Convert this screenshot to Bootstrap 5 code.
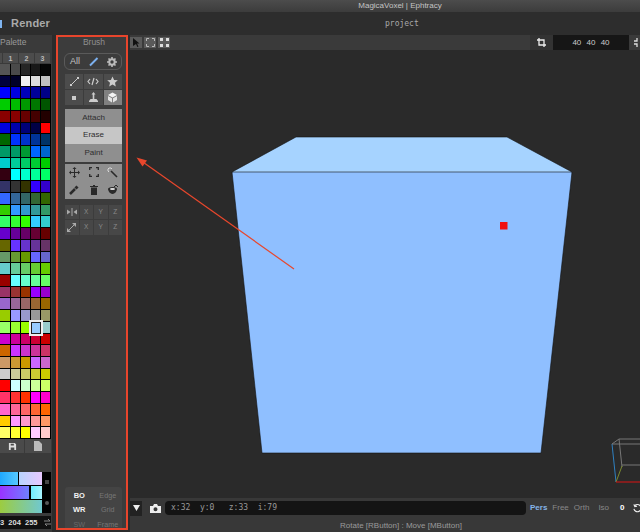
<!DOCTYPE html>
<html lang="en">
<head>
  <meta charset="UTF-8" />
  <title>MagicaVoxel | Ephtracy</title>
  <link href="https://cdn.jsdelivr.net/npm/bootstrap@5.3.0/dist/css/bootstrap.min.css" rel="stylesheet" />
  <style>
    html, body { background: #2b2b2b; }
    body { font-family: "Liberation Sans", Arial, sans-serif; color: #aaa; font-size: 8px; line-height: 1; }
    svg { display: block; }
    .app { width: 640px; height: 532px; overflow: hidden; }
    .titlebar { height: 12px; background: linear-gradient(#4c4c4c, #3c3c3c); color: #c4c4c4; font-size: 8px; padding-left: 160px; flex: none; }
    .menubar { height: 23px; background: #2d2d2d; flex: none; }
    .menu-mark { width: 2px; height: 8px; background: #7fb4f0; }
    .menu-item { width: 119px; padding-left: 9px; font-size: 11px; font-weight: bold; color: #aaa; letter-spacing: .2px; }
    .project { font-family: "DejaVu Sans Mono", monospace; font-size: 8px; color: #a8a8a8; margin-left: 264px; }
    .work { height: 497px; }
    .pal-col { width: 52px; background: #3a3a3a; }
    .side-title { height: 18px; font-size: 8.5px; color: #999; padding-bottom: 4px; }
    .pal-tabs { height: 10px; margin-bottom: 1px; display: grid; grid-template-columns: 3px repeat(3, 16px); font-size: 7px; font-weight: bold; color: #bbb; }
    .pal-tabs span { background: #4c4c4c; margin-right: 1px; display: flex; align-items: center; justify-content: center; }
    .pal-grid { display: grid; grid-template-columns: 11px repeat(4, 10px); grid-auto-rows: 11.72px; gap: 0; background: #000; width: 51px; }
    .pal-cell { border-right: 1px solid #000; border-bottom: 1px solid #000; position: relative; }
    .pal-cell.on { outline: 2px solid #eee; outline-offset: 0; z-index: 1; border: 1px solid #222; }
    .pal-foot { height: 14px; width: 51px; display: grid; grid-template-columns: 24px 26px; gap: 1px; }
    .pal-foot span { background: #4a4a4a; display: flex; align-items: center; justify-content: center; }
    .pickers { margin-top: 19px; height: 41px; width: 51px; background: #000; }
    .pick-rows { width: 42px; }
    .pick-row { height: 13px; margin-bottom: 1px; }
    .pick-a { background: linear-gradient(90deg, #1fa8ff, #56c8ff); width: 18px; margin-right: 1px; }
    .pick-b { background: linear-gradient(90deg, #b8d4ff, #e8c8ff); }
    .pick-c { background: linear-gradient(90deg, #9933ff, #6f80ff); width: 29px; margin-right: 2px; }
    .pick-d { background: linear-gradient(90deg, #70ecff, #a8f4ff); }
    .pick-e { background: linear-gradient(90deg, #9ccc40, #70c8d0); }
    .pick-side { width: 9px; }
    .rgb { margin-top: 3px; height: 13px; width: 51px; background: #111; color: #ddd; font-size: 7.5px; font-weight: bold; }
    .gutter { width: 4px; background: #2b2b2b; }
    .brush { width: 72px; background: #3c3c3c; border: 2px solid #e8452c; padding: 0 4px 0 6px; height: 495px; }
    .brush-title { height: 16px; color: #8f8f8f; font-size: 8.5px; padding-top: 1px; padding-left: 2px; }
    .pill { height: 17px; border: 1px solid #5a5a5a; border-radius: 6px; color: #c4c4c4; font-size: 9px; padding: 0 4px 0 5px; }
    .inset { margin-left: 1px; }
    .tool-grid { display: grid; grid-template-columns: repeat(3, 1fr); grid-auto-rows: 15px; gap: 1px; background: #3c3c3c; }
    .tool { background: #4c4c4c; display: flex; align-items: center; justify-content: center; }
    .tool.on { background: #808080; }
    .mode { height: 17.5px; background: #8f8f8f; color: #2e2e2e; font-size: 8px; display: flex; align-items: center; justify-content: center; }
    .mode.on { background: #c6c6c6; }
    .act-grid { display: grid; grid-template-columns: repeat(3, 1fr); grid-auto-rows: 17.5px; background: #8f8f8f; margin-top: 2px; }
    .act-grid div { display: flex; align-items: center; justify-content: center; }
    .mir-grid { display: grid; grid-template-columns: repeat(4, 1fr); grid-auto-rows: 14.5px; gap: 1px; background: #3c3c3c; margin-top: 6px; }
    .mir-grid div { background: #474747; color: #8a8a8a; font-size: 6.5px; display: flex; align-items: center; justify-content: center; }
    .view-opts { background: #444; height: 41px; padding-top: 1px; display: grid; grid-template-columns: 1fr 1fr; grid-auto-rows: 14.5px; border-radius: 3px 3px 0 0; font-size: 7.2px; text-align: center; align-items: center; color: #777; }
    .view-opts b { color: #f2f2f2; font-size: 7.5px; }
    .view-opts .dim { color: #6a6a6a; }
    .gutter2 { width: 2px; background: #2b2b2b; }
    .stage-col { width: 510px; background: #2a2a2a; }
    .stage-bar { height: 15px; background: #3a3a3a; }
    .mini-btn { width: 12px; height: 11px; background: #5a5a5a; margin-right: 2px; display: flex; align-items: center; justify-content: center; }
    .crop-btn { width: 23px; height: 15px; background: #333; display: flex; align-items: center; justify-content: center; }
    .size-box { width: 76px; height: 15px; background: #161616; color: #ccc; font-size: 8px; word-spacing: 3px; }
    .stage { height: 448px; position: relative; overflow: hidden; }
    .stage svg { position: absolute; left: 0; top: 0; }
    .info-bar { height: 22px; background: #383838; padding-bottom: 2px; }
    .info-btn { width: 12px; height: 15px; background: #222; display: flex; align-items: center; justify-content: center; flex: none; }
    .coords { width: 361px; height: 14px; background: #141414; border-radius: 4px; color: #999; font-family: "DejaVu Sans Mono", monospace; font-size: 8px; margin-left: 4px; padding-left: 6px; white-space: pre; flex: none; }
    .cams { font-size: 8px; color: #888; margin-left: 4px; gap: 5px; white-space: nowrap; flex: none; }
    .cams .act { color: #86b4e8; font-weight: bold; }
    .cam-iso { margin-left: 4px; }
    .cam-zero { margin-left: 6px; color: #fff; }
    .cam-turn { margin-left: 3px; }
    .status { height: 12px; background: #383838; color: #9a9a9a; font-size: 8px; text-align: center; padding-left: 32px; }
  </style>
</head>
<body>
  <div class="app d-flex flex-column">
    <div class="titlebar d-flex align-items-center justify-content-center">MagicaVoxel | Ephtracy</div>
    <div class="menubar d-flex align-items-center">
      <span class="menu-mark"></span>
      <span class="menu-item">Render</span>
      <span class="project">project</span>
    </div>
    <div class="work d-flex">
      <!-- palette -->
      <div class="pal-col d-flex flex-column">
        <div class="side-title d-flex align-items-center">Palette</div>
        <div class="pal-tabs"><span></span><span>1</span><span>2</span><span>3</span></div>
        <div class="pal-grid" id="palette"></div>
        <div class="pal-foot">
          <span><svg width="9" height="9" viewBox="0 0 10 10"><path fill="#ddd" fill-rule="evenodd" d="M1 1h6.500L9 2.500V9H1zM3 2v2h3.500V2zM3 6v3h4V6z"/></svg></span>
          <span><svg width="8" height="10" viewBox="0 0 8 10"><path fill="#bbb" d="M0 0h5l3 3v7H0z"/></svg></span>
        </div>
        <div class="pickers d-flex">
          <div class="pick-rows">
            <div class="pick-row d-flex"><div class="pick-a"></div><div class="pick-b flex-fill"></div></div>
            <div class="pick-row d-flex"><div class="pick-c"></div><div class="pick-d flex-fill"></div></div>
            <div class="pick-row pick-e"></div>
          </div>
          <div class="pick-side d-flex flex-column align-items-center justify-content-around">
            <svg width="4" height="4"><rect width="4" height="4" fill="#444"/></svg>
            <svg width="4" height="4"><circle cx="2" cy="2" r="2" fill="#555"/></svg>
          </div>
        </div>
        <div class="rgb d-flex align-items-center justify-content-between">
          <span>3&nbsp;&nbsp;204&nbsp;&nbsp;255</span>
          <svg width="7" height="7" viewBox="0 0 7 7"><path stroke="#888" fill="none" d="M0 2h6M4 0l2 2M7 5H1M3 7L1 5"/></svg>
        </div>
      </div>
      <div class="gutter"></div>
      <!-- brush -->
      <div class="brush d-flex flex-column">
        <div class="brush-title d-flex justify-content-center">Brush</div>
        <div class="pill d-flex align-items-center justify-content-between">
          <span>All</span>
          <svg width="11" height="11" viewBox="0 0 11 11"><path stroke="#7cb0ee" stroke-width="2" d="M2 9.500L9.500 2"/></svg>
          <svg width="10" height="10" viewBox="0 0 10 10"><circle cx="5" cy="5" r="2.700" fill="none" stroke="#bbb" stroke-width="2"/><path stroke="#bbb" stroke-width="1.600" d="M5 0v2M5 8v2M0 5h2M8 5h2M1.500 1.500l1.400 1.400M7.100 7.100l1.400 1.400M8.500 1.500L7.100 2.900M2.900 7.100L1.500 8.500"/></svg>
        </div>
        <div class="tool-grid inset mt-1">
          <div class="tool"><svg width="11" height="11" viewBox="0 0 11 11"><path stroke="#ccc" d="M2 9L9 2"/><rect x="8" y="1" width="2" height="2" fill="#ccc"/><rect x="1" y="8" width="2" height="2" fill="#ccc"/></svg></div>
          <div class="tool"><svg width="12" height="9" viewBox="0 0 12 9"><path stroke="#ccc" stroke-width="1.200" fill="none" d="M3 2L1 4.500 3 7M9 2l2 2.500L9 7M7 1L5 8"/></svg></div>
          <div class="tool"><svg width="11" height="11" viewBox="0 0 11 11"><path fill="#ccc" d="M5.500.5l1.600 3.400 3.700.4-2.800 2.500.8 3.700-3.300-1.900-3.300 1.900.8-3.700L.2 4.300l3.700-.4z"/></svg></div>
          <div class="tool"><svg width="4" height="4"><rect width="4" height="4" fill="#ccc"/></svg></div>
          <div class="tool"><svg width="11" height="11" viewBox="0 0 11 11"><path fill="#ccc" d="M5.500 0l2 2.500H6.300v4.500h2.200l1.500 2v1H1V9l1.500-2h2.200V2.500H3.500z"/></svg></div>
          <div class="tool on"><svg width="11" height="11" viewBox="0 0 11 11"><path fill="#f4f4f4" d="M5.500.5l4.500 2.500-4.500 2.500L1 3z"/><path fill="#e4e4e4" d="M1 4l4 2.200v4.300L1 8zM10 4L6 6.200v4.300L10 8z"/></svg></div>
        </div>
        <div class="inset mt-1">
          <div class="mode">Attach</div>
          <div class="mode on">Erase</div>
          <div class="mode">Paint</div>
        </div>
        <div class="act-grid inset">
          <div><svg width="11" height="11" viewBox="0 0 11 11"><path stroke="#2a2a2a" d="M5.500 1v9M1 5.500h9"/><path fill="#2a2a2a" d="M5.500 0l2 2h-4zM5.500 11l2-2h-4zM0 5.500l2-2v4zM11 5.500l-2-2v4z"/></svg></div>
          <div><svg width="10" height="10" viewBox="0 0 10 10"><path stroke="#2a2a2a" stroke-width="1.300" fill="none" d="M.7 3V.7H3M7 .7h2.300V3M9.300 7v2.300H7M3 9.300H.7V7"/></svg></div>
          <div><svg width="11" height="11" viewBox="0 0 11 11"><path stroke="#2a2a2a" stroke-width="1.600" d="M4 4l6 6"/><path stroke="#eee" stroke-width=".8" d="M3 0v2M0 3h2M1 1l1 1M5 1L4 2M1 5l1-1"/></svg></div>
          <div><svg width="11" height="11" viewBox="0 0 11 11"><path stroke="#2a2a2a" stroke-width="2.500" d="M1 10l5-5"/><path stroke="#2a2a2a" stroke-width="3" d="M6.500 4.500l2-2"/></svg></div>
          <div><svg width="8" height="10" viewBox="0 0 8 10"><path fill="#2a2a2a" d="M0 1h8v1H0zM1 2.500h6V10H1zM3 0h2v1H3z"/></svg></div>
          <div><svg width="12" height="11" viewBox="0 0 12 11"><path fill="#2a2a2a" d="M1 5c0-1 1.500-2 4.500-2S10 4 10 5s-1.500 5-4.500 5S1 6 1 5z"/><path fill="#d8d8d8" d="M3 5c0-.6 1-1 2.500-1S8 4.400 8 5 7 6 5.500 6 3 5.600 3 5z"/><path stroke="#2a2a2a" fill="none" d="M7 3l2-2 2 2"/></svg></div>
        </div>
        <div class="mir-grid inset">
          <div><svg width="10" height="8" viewBox="0 0 10 8"><path stroke="#aaa" d="M5 0v8"/><path fill="#aaa" d="M0 1.500l3.500 2.500L0 6.500zM10 1.500L6.500 4l3.500 2.500z"/></svg></div>
          <div>X</div><div>Y</div><div>Z</div>
          <div><svg width="9" height="9" viewBox="0 0 9 9"><path stroke="#aaa" d="M1 8l7-7"/><path fill="#aaa" d="M5 0h4v4zM0 5v4h4z"/></svg></div>
          <div>X</div><div>Y</div><div>Z</div>
        </div>
        <div class="view-opts inset mt-auto">
          <b>BO</b><span>Edge</span>
          <b>WR</b><span>Grid</span>
          <span class="dim">SW</span><span>Frame</span>
        </div>
      </div>
      <div class="gutter2"></div>
      <!-- viewport -->
      <div class="stage-col d-flex flex-column">
        <div class="stage-bar d-flex align-items-center">
          <div class="mini-btn"><svg width="7" height="9" viewBox="0 0 7 9"><path fill="#111" d="M0 0l6.500 5.500H4l1.500 3-1.200.5L3 6 0 8z"/></svg></div>
          <div class="mini-btn"><svg width="9" height="9" viewBox="0 0 9 9"><path stroke="#bbb" fill="none" d="M.5 3V.5H3M6 .5h2.500V3M8.500 6v2.500H6M3 8.500H.5V6"/></svg></div>
          <div class="mini-btn"><svg width="9" height="9" viewBox="0 0 9 9"><path fill="#ddd" d="M0 0h3v3H0zM6 0h3v3H6zM0 6h3v3H0zM6 6h3v3H6z"/></svg></div>
          <div class="crop-btn ms-auto"><svg width="9" height="9" viewBox="0 0 9 9"><path stroke="#eee" stroke-width="1.300" fill="none" d="M2 0v7h7M0 2h7v7"/></svg></div>
          <div class="size-box d-flex align-items-center justify-content-center">40 40 40</div>
          <div class="d-flex align-items-center" style="width:11px;padding-left:5px"><svg width="6" height="9" viewBox="0 0 6 9"><path stroke="#ddd" stroke-width="1.300" fill="none" d="M0 3h3V0M0 6h3v3"/></svg></div>
        </div>
        <div class="stage">
          <svg width="510" height="448" viewBox="130 50 510 448">
            <path fill="#a6d3ff" d="M296 137H507L572 172H232z"/>
            <path fill="#8fbfff" stroke="#111" stroke-width=".6" d="M232 172H572L541 453H262z"/>
            <path fill="none" stroke="#111" stroke-width=".6" d="M232 172L296 137H507L572 172"/>
            <rect x="500" y="222" width="7.500" height="7.500" fill="#f01010"/>
            <path fill="none" stroke="#e8472c" stroke-width="1.200" d="M294 269L140 160"/>
            <path fill="#e8472c" d="M136.500 157.500L147 160.500L142.500 166.500z"/>
            <g fill="none" stroke-width="1">
              <path stroke="#777" d="M612 444L619 439H640M619 439L622 467M622 465H640"/>
              <path stroke="#2f80c0" d="M612 444L616 482"/>
              <path stroke="#7a8a30" d="M616 482L622 466"/>
              <path stroke="#c01818" stroke-width="1.200" d="M616 482H640"/>
              <path stroke="#777" d="M612 444H640"/>
            </g>
          </svg>
        </div>
        <div class="info-bar d-flex align-items-center">
          <div class="info-btn"><svg width="7" height="6" viewBox="0 0 7 6"><path fill="#eee" d="M0 0h7L3.500 6z"/></svg></div>
          <div class="ms-2"><svg width="11" height="9" viewBox="0 0 11 9"><path fill="#eee" fill-rule="evenodd" d="M0 2h3l1-2h3l1 2h3v7H0zM5.500 3.200a2 2 0 1 0 0 4 2 2 0 0 0 0-4z"/></svg></div>
          <div class="coords d-flex align-items-center">x:32  y:0   z:33  i:79</div>
          <div class="cams d-flex align-items-center">
            <span class="act">Pers</span><span>Free</span><span>Orth</span><span class="cam-iso">Iso</span>
            <b class="cam-zero">0</b>
            <svg class="cam-turn" width="9" height="10" viewBox="0 0 10 10"><path stroke="#eee" stroke-width="1.300" fill="none" d="M1.500 3a4 4 0 1 1-.5 3M1 1l1 2.500L4.500 3"/></svg>
          </div>
        </div>
        <div class="status d-flex align-items-center justify-content-center">Rotate [RButton] : Move [MButton]</div>
      </div>
    </div>
  </div>
  <script>
    // palette rows, left to right, right-hand five columns of the 8 shown by the app
    const rows = [
      "555555 4a4a4a 252525 181818 050505", "00003c 000028 f0f0f0 dcdcdc c0c0c0",
      "0000ff 0000dd 0000bb 000099 000088", "00cc00 00bb00 009900 007700 005500",
      "880000 880000 660000 440000 220000", "0000dd 0000aa 000077 000044 ff0000",
      "006600 0033ff 0033cc 003399 003366", "009966 009966 009933 0066ff 0066cc",
      "00cccc 00cc99 00cc66 00cc33 00cc00", "330011 00ffff 00ffcc 00ff99 00ff66",
      "333366 333333 333300 3300ff 3300cc", "3366ff 336699 336666 336633 336600",
      "33cc00 3399ff 3399cc 339999 339966", "33ff66 33ff33 33ff00 33ccff 33cccc",
      "6600cc 660099 660066 660033 660000", "666600 6633ff 6633cc 663399 663366",
      "669966 669933 669900 6666ff 6666cc", "66cccc 66cc99 66cc66 66cc33 66cc00",
      "990000 66ffff 66ffcc 66ff99 66ff66", "993366 993333 993300 9900ff 9900cc",
      "9966cc 996699 996666 996633 996600", "99cc00 9999ff 9999cc 999999 999966",
      "99ff66 99ff33 99ff00 99ccff 99cccc", "cc00cc cc0099 cc0066 cc0033 cc0000",
      "cc6600 cc33ff cc33cc cc3399 cc3366", "cc9966 cc9933 cc9900 cc66ff cc66cc",
      "cccccc cccc99 cccc66 cccc33 cccc00", "ff0000 ccffff ccffcc ccff99 ccff66",
      "ff3366 ff3333 ff3300 ff00ff ff00cc", "ff66cc ff6699 ff6666 ff6633 ff6600",
      "ffcc00 ff99ff ff99cc ff9999 ff9966", "ffff66 ffff33 ffff00 ffccff ffcccc"
    ];
    const pal = document.getElementById("palette");
    rows.forEach((row, r) => {
      row.split(" ").forEach((hex, c) => {
        const cell = document.createElement("div");
        cell.className = "pal-cell" + (r === 22 && c === 3 ? " on" : "");
        cell.style.background = "#" + hex;
        pal.appendChild(cell);
      });
    });
  </script>
  <script src="https://cdn.jsdelivr.net/npm/bootstrap@5.3.0/dist/js/bootstrap.bundle.min.js"></script>
</body>
</html>
